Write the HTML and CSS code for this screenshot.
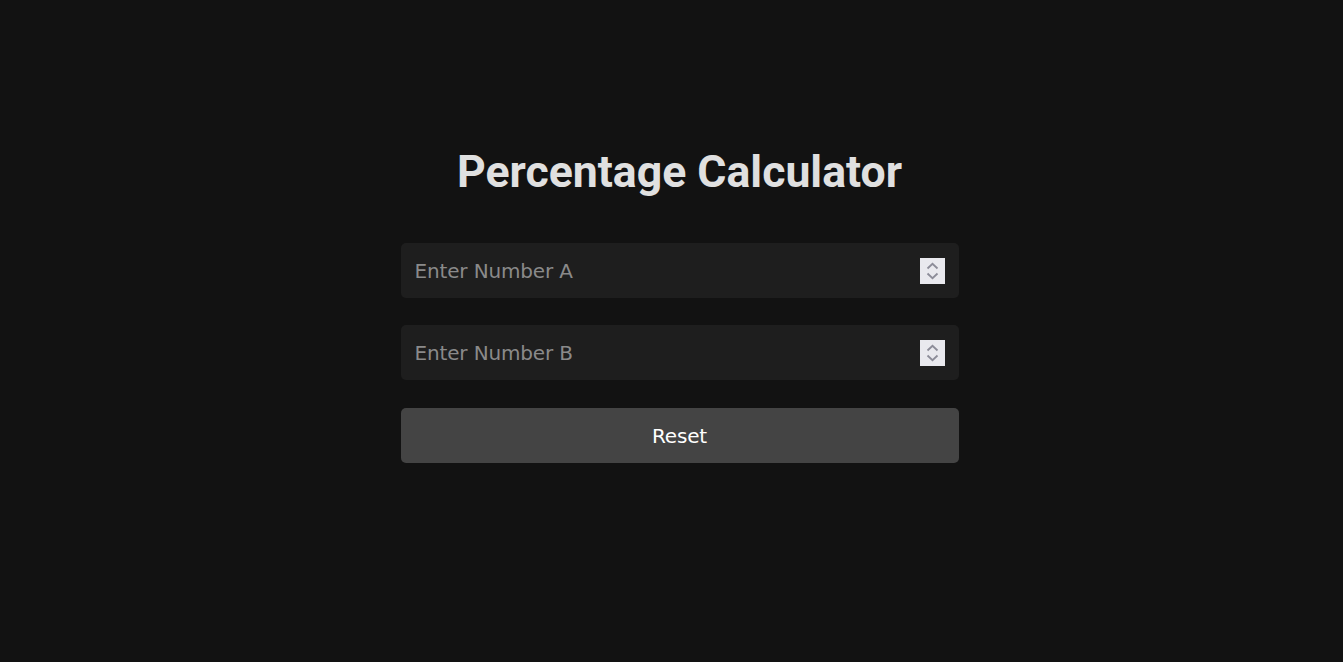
FILE: index.html
```html
<!DOCTYPE html>
<html lang="en">
<head>
<meta charset="utf-8">
<title>Percentage Calculator</title>
<link rel="stylesheet" href="styles.css">
</head>
<body>
<main class="calc">
  <h1 class="title">Percentage Calculator</h1>
  <div class="field">
    <input class="field-input" type="text" placeholder="Enter Number A">
    <span class="spinner">
      <svg width="25" height="26" viewBox="0 0 25 26"><path d="M7.5 10.5 L12.5 5.8 L17.5 10.5" fill="none" stroke="#8c8c98" stroke-width="1.8"/><path d="M7.5 15.5 L12.5 20.2 L17.5 15.5" fill="none" stroke="#8c8c98" stroke-width="1.8"/></svg>
    </span>
  </div>
  <div class="field">
    <input class="field-input" type="text" placeholder="Enter Number B">
    <span class="spinner">
      <svg width="25" height="26" viewBox="0 0 25 26"><path d="M7.5 10.5 L12.5 5.8 L17.5 10.5" fill="none" stroke="#8c8c98" stroke-width="1.8"/><path d="M7.5 15.5 L12.5 20.2 L17.5 15.5" fill="none" stroke="#8c8c98" stroke-width="1.8"/></svg>
    </span>
  </div>
  <button class="reset" type="button">Reset</button>
</main>
</body>
</html>
```

FILE: styles.css
```css
* { box-sizing: border-box; }
html, body { margin: 0; padding: 0; }
body {
  background: #121212;
  min-height: 662px;
  padding-left: 16px;
  font-family: "DejaVu Sans", "Noto Sans", sans-serif;
}
.calc {
  width: 558px;
  margin: 0 auto;
  padding-top: 146px;
  display: flex;
  flex-direction: column;
}
.title {
  margin: 0 0 44px;
  font-family: Roboto, "Liberation Sans", sans-serif;
  font-weight: 700;
  font-size: 44.6px;
  line-height: 53px;
  color: #e0e0e0;
  text-align: center;
}
.field {
  height: 55px;
  background: #1e1e1e;
  border-radius: 5px;
  display: flex;
  align-items: center;
  padding: 0 14px 0 14px;
  margin-bottom: 27px;
}
.field-input {
  flex: 1;
  min-width: 0;
  background: transparent;
  border: none;
  outline: none;
  color: #e0e0e0;
  font-family: "DejaVu Sans", sans-serif;
  font-size: 20px;
  letter-spacing: -0.15px;
  padding: 0;
}
.field-input::placeholder { color: #8a8a8a; }
.spinner {
  width: 25px;
  height: 26px;
  background: #e9e9ee;
  display: block;
}
.spinner svg { display: block; }
.reset {
  height: 55px;
  margin-top: 1px;
  background: #444444;
  border: none;
  border-radius: 5px;
  color: #ffffff;
  font-family: "DejaVu Sans", sans-serif;
  font-size: 20px;
  letter-spacing: -0.15px;
}
```
